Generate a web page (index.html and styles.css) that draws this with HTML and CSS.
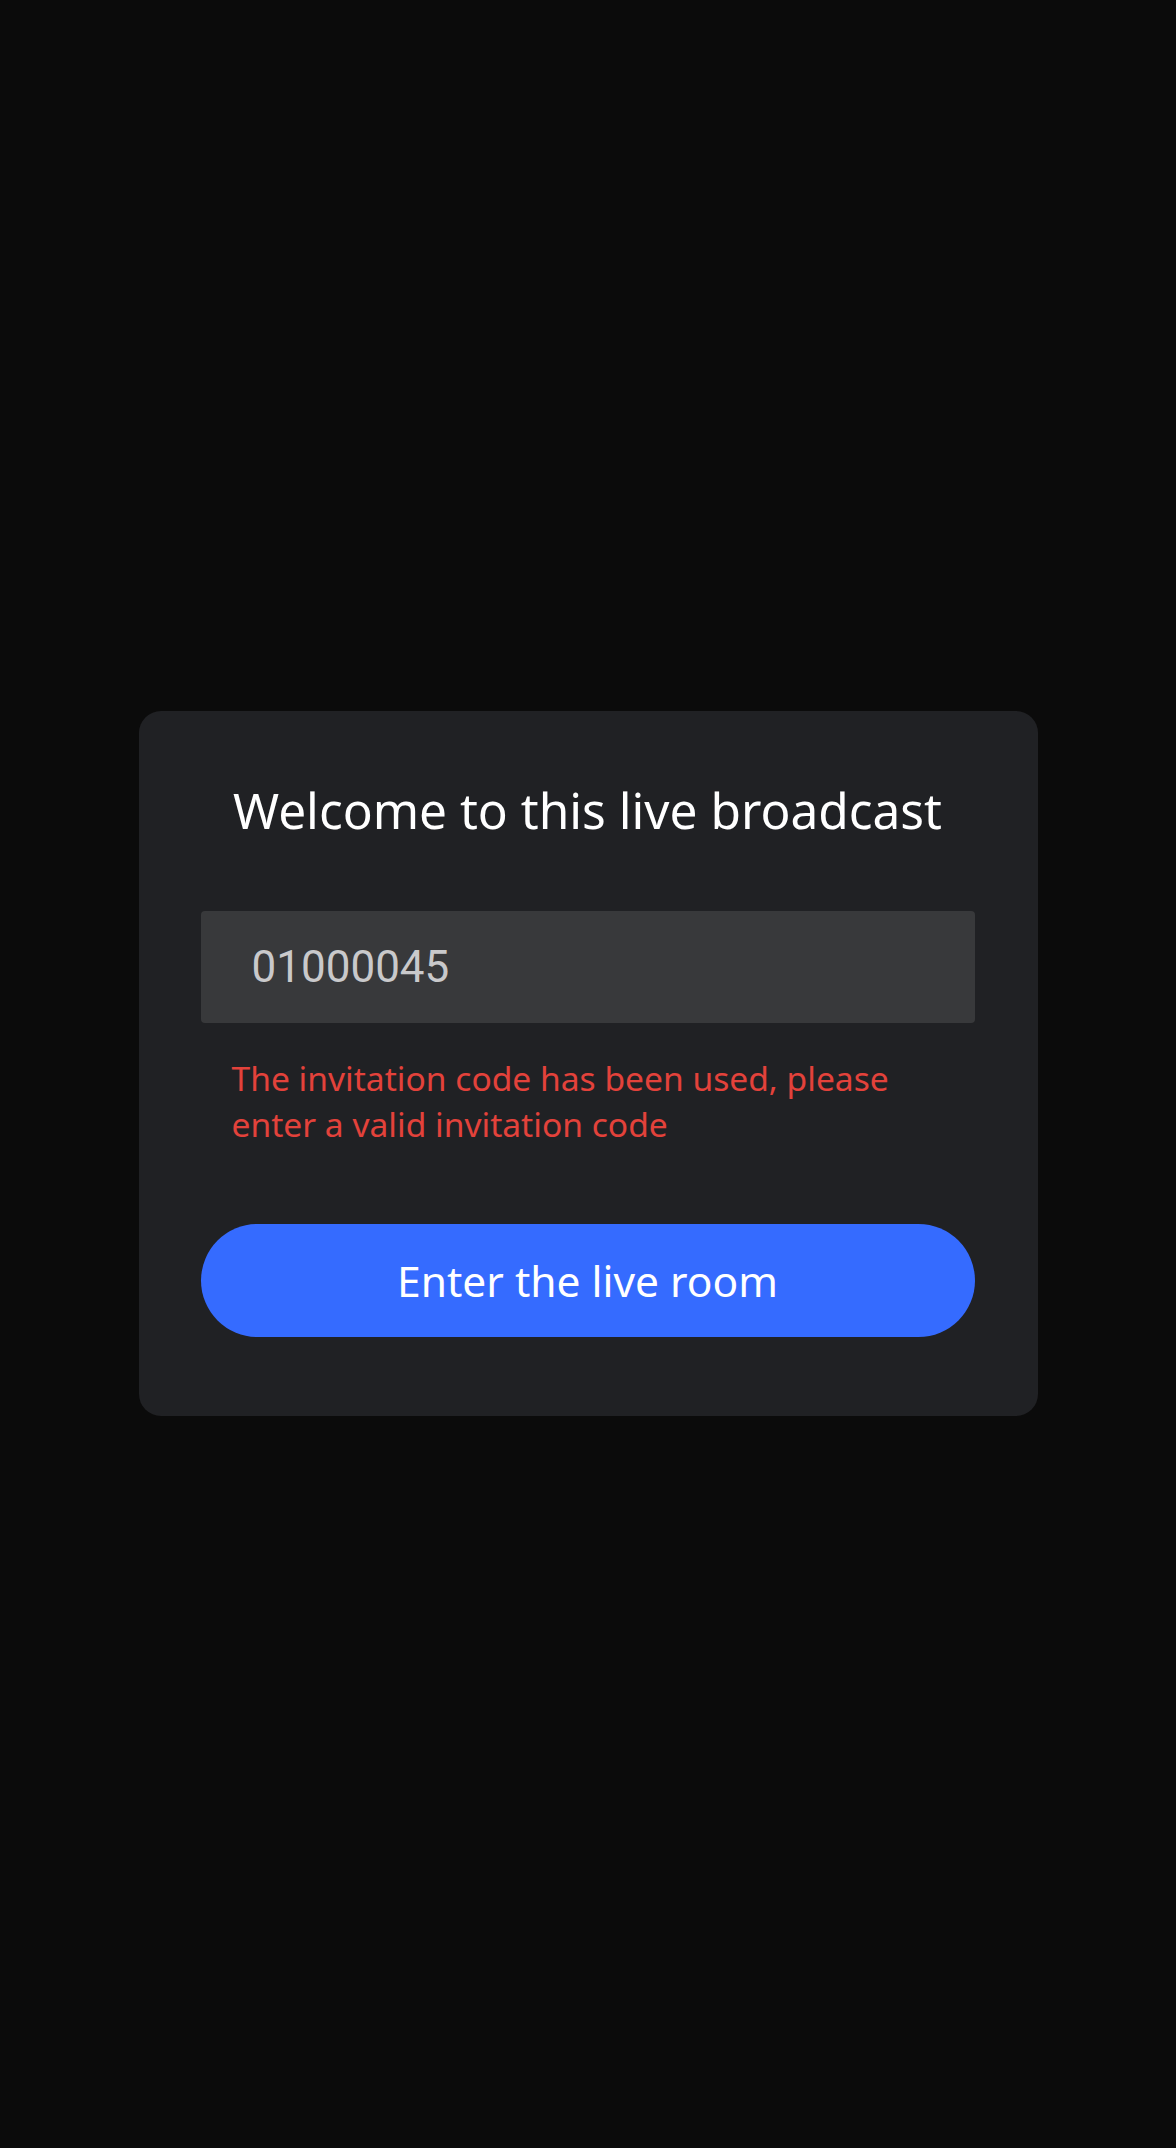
FILE: index.html
```html
<!DOCTYPE html>
<html lang="en">
<head>
<meta charset="utf-8">
<title>Live broadcast</title>
<link rel="stylesheet" href="styles.css">
</head>
<body>
<main class="page">
  <section class="card">
    <h1 class="title">Welcome to this live broadcast</h1>
    <div class="field">
      <span class="field-value">01000045</span>
    </div>
    <p class="error">The invitation code has been used, please enter a valid invitation code</p>
    <button class="enter-btn" type="button">Enter the live room</button>
  </section>
</main>
</body>
</html>
```

FILE: styles.css
```css
html, body {
  margin: 0;
  padding: 0;
  background: #0b0b0b;
}

body {
  min-height: 2148px;
  font-family: "Noto Sans", "Liberation Sans", sans-serif;
}

.page {
  display: flex;
  justify-content: center;
  padding-top: 711px;
}

.card {
  box-sizing: border-box;
  width: 899px;
  height: 705px;
  background: #202124;
  border-radius: 22px;
  padding: 63px 63px 0 62px;
  display: flex;
  flex-direction: column;
}

.title {
  margin: 0;
  font-weight: 400;
  font-size: 49.6px;
  line-height: 72px;
  color: #ffffff;
  text-align: center;
  white-space: nowrap;
}

.field {
  margin-top: 65px;
  height: 112px;
  box-sizing: border-box;
  background: #38393b;
  border-radius: 4px;
  display: flex;
  align-items: center;
  padding-left: 51px;
}

.field-value {
  font-family: Roboto, "Liberation Sans", sans-serif;
  font-size: 44px;
  color: #c9c9cb;
}

.error {
  margin: 32px 0 0 0;
  padding: 0 31px;
  font-size: 33.6px;
  line-height: 46px;
  color: #e3423b;
}

.enter-btn {
  margin-top: 77px;
  height: 113px;
  border: none;
  border-radius: 57px;
  background: #356bff;
  color: #ffffff;
  font-family: "Noto Sans", "Liberation Sans", sans-serif;
  font-weight: 400;
  font-size: 42.5px;
  padding: 0;
}
```
